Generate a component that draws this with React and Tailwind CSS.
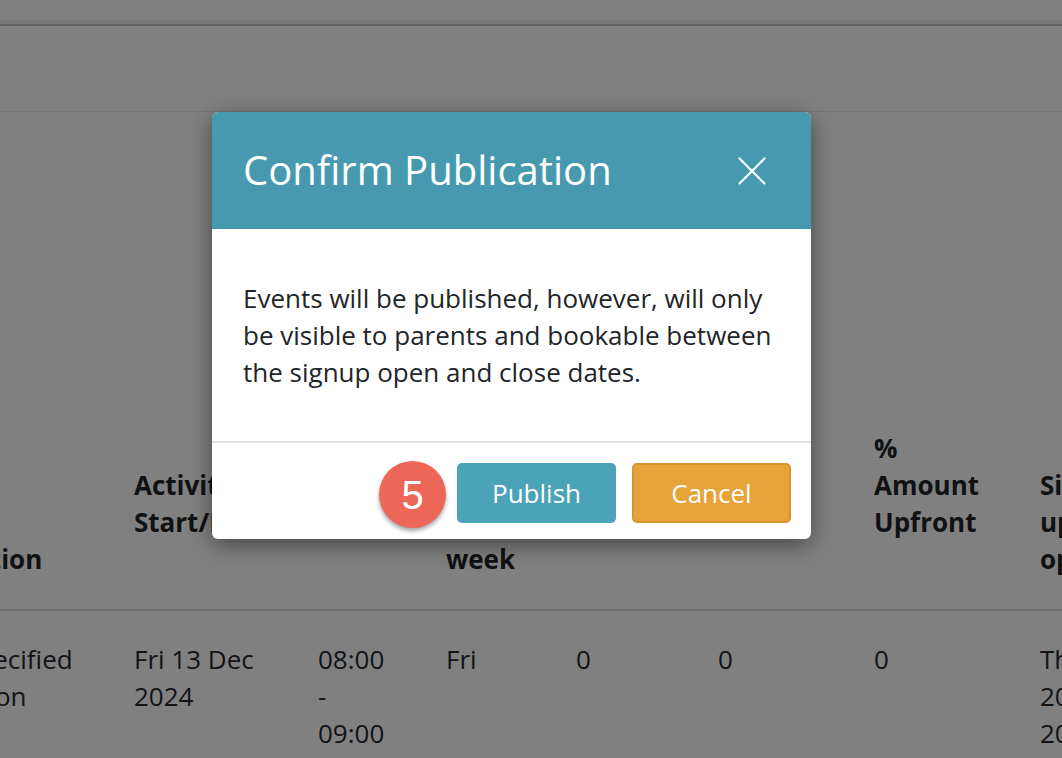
import { X } from "lucide-react";

const columns = [
  { w: "w-[204px]", head: ["Location"], pb: "pb-[31px]", body: ["Unspecified", "location"] },
  { w: "w-[184px]", head: ["Activity", "Start/End"], pb: "pb-[68px]", body: ["Fri 13 Dec", "2024"] },
  { w: "w-[128px]", head: ["Time"], pb: "pb-[105px]", body: ["08:00", "-", "09:00"] },
  { w: "w-[130px]", head: ["Day of", "week"], pb: "pb-[31px]", body: ["Fri"] },
  { w: "w-[142px]", head: ["Places"], pb: "pb-[68px]", body: ["0"] },
  { w: "w-[156px]", head: ["Paid"], pb: "pb-[68px]", body: ["0"] },
  { w: "w-[166px]", head: ["%", "Amount", "Upfront"], pb: "pb-[68px]", body: ["0"] },
  { w: "w-[200px]", head: ["Sign", "up", "opens"], pb: "pb-[31px]", body: ["Thu 12", "2024", "20:00"] },
];

function Table() {
  return (
    <div className="ml-[-70px] w-[1316px]">
      {/* ==================== Header ==================== */}
      <div className="flex h-[499px] border-b-2 border-[#6c7074]">
        {columns.map((c, i) => (
          <div
            key={i}
            className={`${c.w} shrink-0 flex flex-col justify-end ${c.pb} text-[26px] leading-[37px] font-bold text-[#0f1113]`}
          >
            {c.head.map((t, j) => (
              <div key={j} className="whitespace-nowrap">
                {t}
              </div>
            ))}
          </div>
        ))}
      </div>
      {/* ===================== Row ====================== */}
      <div className="flex pt-[30px]">
        {columns.map((c, i) => (
          <div
            key={i}
            className={`${c.w} shrink-0 text-[26px] leading-[37px] text-[#111316]`}
          >
            {c.body.map((t, j) => (
              <div key={j} className="whitespace-nowrap">
                {t}
              </div>
            ))}
          </div>
        ))}
      </div>
    </div>
  );
}

function Modal() {
  return (
    <div className="absolute left-[212px] top-[112px] w-[599px] bg-white rounded-[6px] shadow-[0_6px_22px_rgba(0,0,0,0.45)]">
      <div className="h-[117px] bg-[#4699ae] rounded-t-[6px] pl-[31px] pr-[34px] flex items-center justify-between">
        <div className="text-[40px] text-white leading-none pb-[2px]">
          Confirm Publication
        </div>
        <X className="w-[50px] h-[50px] text-white" strokeWidth={1.05} />
      </div>
      <div className="px-[31px] pt-[51px] pb-[50px] text-[26px] leading-[37px] text-[#212529]">
        Events will be published, however, will only be visible to parents and
        bookable between the signup open and close dates.
      </div>
      <div className="relative border-t-2 border-[#dee2e6] pt-[20px] pb-[16px] pr-[20px] flex justify-end gap-[16px]">
        <div className="absolute left-[167px] top-[18px] w-[67px] h-[67px] rounded-full bg-[#ec6758] shadow-[0_3px_4px_rgba(0,0,0,0.35)] flex items-center justify-center text-white text-[40px] font-['Liberation_Sans',Arial,sans-serif]">
          5
        </div>
        <button className="w-[159px] h-[60px] rounded-[5px] bg-[#4aa3b6] text-white text-[26px]">
          Publish
        </button>
        <button className="w-[159px] h-[60px] rounded-[5px] bg-[#e8a23a] border-2 border-[#d6932f] text-white text-[26px]">
          Cancel
        </button>
      </div>
    </div>
  );
}

export default function App() {
  return (
    <div className="relative w-full h-[758px] overflow-hidden bg-[#808080] font-['Open_Sans',sans-serif]">
      <div className="h-[20px]" />
      <div className="h-[4px] bg-[#797979]" />
      <div className="h-[2px] bg-[#5e6266]" />
      <div className="h-[85px]" />
      <div className="h-[1px] bg-[#76777a]" />
      <Table />
      <Modal />
    </div>
  );
}
